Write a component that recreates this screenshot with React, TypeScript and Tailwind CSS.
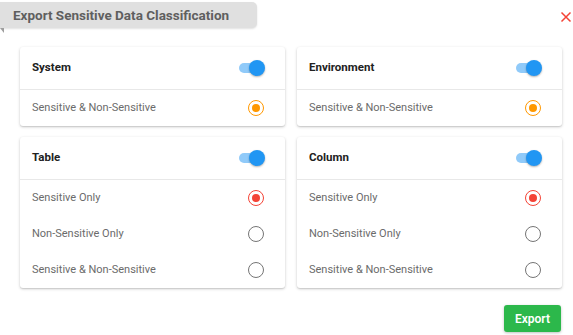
import React, { useState } from 'react';

type Choice = 'sensitive' | 'non' | 'both';

interface Section {
  key: string;
  title: string;
  options: { value: Choice; label: string }[];
  tone: 'orange' | 'red';
}

const SECTIONS: Section[] = [
  { key: 'system', title: 'System', tone: 'orange', options: [{ value: 'both', label: 'Sensitive & Non-Sensitive' }] },
  { key: 'environment', title: 'Environment', tone: 'orange', options: [{ value: 'both', label: 'Sensitive & Non-Sensitive' }] },
  {
    key: 'table',
    title: 'Table',
    tone: 'red',
    options: [
      { value: 'sensitive', label: 'Sensitive Only' },
      { value: 'non', label: 'Non-Sensitive Only' },
      { value: 'both', label: 'Sensitive & Non-Sensitive' },
    ],
  },
  {
    key: 'column',
    title: 'Column',
    tone: 'red',
    options: [
      { value: 'sensitive', label: 'Sensitive Only' },
      { value: 'non', label: 'Non-Sensitive Only' },
      { value: 'both', label: 'Sensitive & Non-Sensitive' },
    ],
  },
];

function Toggle({ on, onClick }: { on: boolean; onClick: () => void }) {
  return (
    <button onClick={onClick} className="relative w-[26px] h-[17px] flex items-center">
      <span className={`block w-[22px] h-[10px] rounded-full ${on ? 'bg-[#90caf9]' : 'bg-[#bdbdbd]'}`} />
      <span
        className={`absolute top-0 w-[16px] h-[16px] rounded-full shadow-[0_1px_2px_rgba(0,0,0,0.3)] ${
          on ? 'left-[10px] bg-[#2196f3]' : 'left-[-4px] bg-[#fafafa]'
        }`}
      />
    </button>
  );
}

function Radio({ checked, tone }: { checked: boolean; tone: 'orange' | 'red' }) {
  const ring = checked ? (tone === 'orange' ? 'border-[#ff9800]' : 'border-[#f44336]') : 'border-[#757575]';
  const dot = tone === 'orange' ? 'bg-[#ff9800]' : 'bg-[#f44336]';
  return (
    <span className={`w-[16px] h-[16px] rounded-full border-[1.5px] ${ring} flex items-center justify-center`}>
      {checked && <span className={`w-[8px] h-[8px] rounded-full ${dot}`} />}
    </span>
  );
}

export default function App() {
  const [enabled, setEnabled] = useState<Record<string, boolean>>({ system: true, environment: true, table: true, column: true });
  const [picked, setPicked] = useState<Record<string, Choice>>({ system: 'both', environment: 'both', table: 'sensitive', column: 'sensitive' });

  return (
    <div className="w-[573px] h-[335px] bg-white relative overflow-hidden" style={{ fontFamily: 'Roboto, "Liberation Sans", sans-serif' }}>
      <div className="pt-[2px] flex items-start justify-between">
        <div className="relative">
          <div className="h-[26px] w-[257px] bg-[#e0e0e0] rounded-r-[5px] flex items-center pl-[13px] text-[13.5px] font-bold text-[#5f5f5f] shadow-[0_1px_2px_rgba(0,0,0,0.12)]">
            Export Sensitive Data Classification
          </div>
          <div className="w-0 h-0 border-t-[5px] border-t-[#9e9e9e] border-l-[4px] border-l-transparent" />
        </div>
        <button className="mr-[1px] mt-[9px] text-[#f44336]">
          <svg width="12" height="12" viewBox="0 0 12 12" fill="none" stroke="currentColor" strokeWidth="1.5">
            <path d="M1.5 1.5 L10.5 10.5 M10.5 1.5 L1.5 10.5" />
          </svg>
        </button>
      </div>

      <div className="grid grid-cols-2 gap-x-[12px] gap-y-[11px] pl-[20px] pr-[11px] mt-[14px]">
        {SECTIONS.map(sec => (
          <div key={sec.key} className="bg-white rounded-[3px] shadow-[0_1px_3px_rgba(0,0,0,0.22),0_1px_1px_rgba(0,0,0,0.06)]">
            <div className="h-[43px] flex items-center justify-between pl-[12px] pr-[20px] border-b border-[#e8e8e8]">
              <span className="text-[11.5px] font-bold text-[#212121]">{sec.title}</span>
              <Toggle on={enabled[sec.key]} onClick={() => setEnabled(prev => ({ ...prev, [sec.key]: !prev[sec.key] }))} />
            </div>
            {sec.options.map(opt => (
              <div
                key={opt.value}
                onClick={() => setPicked(prev => ({ ...prev, [sec.key]: opt.value }))}
                className="h-[36px] flex items-center justify-between pl-[12px] pr-[21px] cursor-pointer"
              >
                <span className="text-[11px] text-[#6b6b6b]">{opt.label}</span>
                <Radio checked={picked[sec.key] === opt.value} tone={sec.tone} />
              </div>
            ))}
          </div>
        ))}
      </div>

      <div className="flex justify-end pr-[12px] mt-[17px]">
        <button className="h-[27px] px-[11px] bg-[#2cb84b] rounded-[3px] text-white text-[12px] font-semibold shadow-[0_1px_3px_rgba(0,0,0,0.25)]">
          Export
        </button>
      </div>
    </div>
  );
}
